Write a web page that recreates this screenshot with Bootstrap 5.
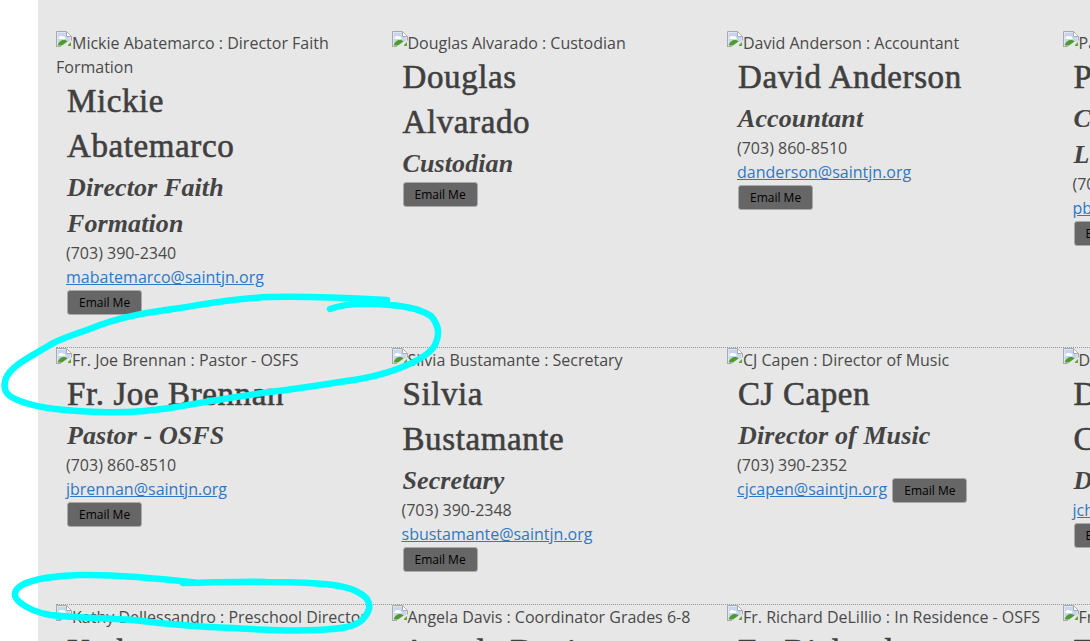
<!DOCTYPE html>
<html lang="en">
<head>
  <meta charset="UTF-8" />
  <meta name="viewport" content="width=device-width, initial-scale=1.0"/>
  <title>Staff Directory</title>
  <link href="https://cdn.jsdelivr.net/npm/bootstrap@5.3.0/dist/css/bootstrap.min.css" rel="stylesheet" />
  <style>
    html, body {
      height: 100%;
      overflow: hidden;
    }

    body {
      position: relative;
      background: #fff;
      font-family: "Open Sans", "Liberation Sans", sans-serif;
      font-size: 16px;
      line-height: 24px;
      color: #4a4a4a;
    }

    .staff-page {
      margin-left: 38px;
      padding: 31px 0 0 18px;
      background: #e7e7e7;
      height: 100%;
      overflow: hidden;
    }

    .staff-row {
      width: 1400px;
      padding-bottom: 32px;
    }

    .staff-row + .staff-row {
      border-top: 1px dotted #999;
    }

    .staff-cell {
      width: 335.5px;
      flex: none;
    }

    .photo-alt {
      padding-right: 10px;
    }

    .photo-alt svg {
      vertical-align: 2px;
    }

    .staff-info {
      padding: 0 10px;
    }

    .staff-name {
      font-family: "Liberation Serif", serif;
      font-size: 33px;
      line-height: 45px;
      font-weight: 400;
      letter-spacing: .6px;
      color: #3f3f3f;
      -webkit-text-stroke: .6px #3f3f3f;
      max-width: 232px;
      margin: 0;
      padding-left: 1px;
    }

    .staff-title {
      font-family: "Liberation Serif", serif;
      font-size: 26px;
      line-height: 36px;
      font-weight: 700;
      font-style: italic;
      letter-spacing: .1px;
      color: #444;
      max-width: 232px;
      margin: 0 0 -1px;
      padding: 1px 0 0 1px;
    }

    .staff-mail {
      color: #2f78c4;
    }

    .mail-btn {
      font-size: 12px;
      line-height: 17px;
      padding: 3px 11px;
      margin-left: 1px;
      margin-top: 1px;
      background: #666;
      border: 1px solid #aaa;
      border-radius: 3px;
      color: #000;
      vertical-align: top;
    }

    .scribble {
      position: absolute;
      left: 0;
      top: 0;
      pointer-events: none;
    }

    .scribble path {
      fill: none;
      stroke: #0ff;
      stroke-width: 6.5;
      stroke-linecap: round;
      stroke-linejoin: round;
    }
  </style>
</head>
<body>

  <svg width="0" height="0" class="d-block" aria-hidden="true">
    <symbol id="brokenImg" viewBox="0 0 16 16">
      <path d="M.5 15.5V.5h10l5 5v4" fill="#f4f4f4" stroke="#a9a9a9"/>
      <path d="M1.5 1.5h8.5v4.500h4.500v4L1.500 14z" fill="#c6d6f0"/>
      <path d="M10.500 1v4.500H15" fill="#fff" stroke="#a9a9a9"/>
      <path d="M2.500 7c.5-2 3-2.500 4-1.500 1.500-.5 3 .5 3 2.500H2.500z" fill="#fff"/>
      <path d="M1.500 14.500c1-3.500 3.500-5.500 6.500-5.500 1.500 0 2.500.5 3.500 1.500L6 14.500z" fill="#4f9a2c"/>
      <path d="M12 14l3-3v4h-3z" fill="#5aa832"/>
      <path d="M0 15.500h5" stroke="#a9a9a9"/>
    </symbol>
  </svg>

  <div class="staff-page">

    <div class="staff-row d-flex">
      <div class="staff-cell">
        <div class="photo-alt"><svg width="16" height="16"><use href="#brokenImg"/></svg>Mickie Abatemarco : Director Faith Formation</div>
        <div class="staff-info">
          <h2 class="staff-name">Mickie Abatemarco</h2>
          <h3 class="staff-title">Director Faith Formation</h3>
          <div>(703) 390-2340</div>
          <a href="#" class="staff-mail d-block">mabatemarco@saintjn.org</a>
          <a href="#" class="btn mail-btn">Email Me</a>
        </div>
      </div>
      <div class="staff-cell">
        <div class="photo-alt"><svg width="16" height="16"><use href="#brokenImg"/></svg>Douglas Alvarado : Custodian</div>
        <div class="staff-info">
          <h2 class="staff-name">Douglas Alvarado</h2>
          <h3 class="staff-title">Custodian</h3>
          <a href="#" class="btn mail-btn">Email Me</a>
        </div>
      </div>
      <div class="staff-cell">
        <div class="photo-alt"><svg width="16" height="16"><use href="#brokenImg"/></svg>David Anderson : Accountant</div>
        <div class="staff-info">
          <h2 class="staff-name">David Anderson</h2>
          <h3 class="staff-title">Accountant</h3>
          <div>(703) 860-8510</div>
          <a href="#" class="staff-mail d-block">danderson@saintjn.org</a>
          <a href="#" class="btn mail-btn">Email Me</a>
        </div>
      </div>
      <div class="staff-cell">
        <div class="photo-alt"><svg width="16" height="16"><use href="#brokenImg"/></svg>Pat Bauer : Coordinator Liturgy</div>
        <div class="staff-info">
          <h2 class="staff-name">Pat Bauer</h2>
          <h3 class="staff-title">Coordinator<br>Liturgy</h3>
          <div>(703) 390-2341</div>
          <a href="#" class="staff-mail d-block">pbauer@saintjn.org</a>
          <a href="#" class="btn mail-btn">Email Me</a>
        </div>
      </div>
    </div>

    <div class="staff-row d-flex">
      <div class="staff-cell">
        <div class="photo-alt"><svg width="16" height="16"><use href="#brokenImg"/></svg>Fr. Joe Brennan : Pastor - OSFS</div>
        <div class="staff-info">
          <h2 class="staff-name">Fr. Joe Brennan</h2>
          <h3 class="staff-title">Pastor - OSFS</h3>
          <div>(703) 860-8510</div>
          <a href="#" class="staff-mail d-block">jbrennan@saintjn.org</a>
          <a href="#" class="btn mail-btn">Email Me</a>
        </div>
      </div>
      <div class="staff-cell">
        <div class="photo-alt"><svg width="16" height="16"><use href="#brokenImg"/></svg>Silvia Bustamante : Secretary</div>
        <div class="staff-info">
          <h2 class="staff-name">Silvia Bustamante</h2>
          <h3 class="staff-title">Secretary</h3>
          <div>(703) 390-2348</div>
          <a href="#" class="staff-mail d-block">sbustamante@saintjn.org</a>
          <a href="#" class="btn mail-btn">Email Me</a>
        </div>
      </div>
      <div class="staff-cell">
        <div class="photo-alt"><svg width="16" height="16"><use href="#brokenImg"/></svg>CJ Capen : Director of Music</div>
        <div class="staff-info">
          <h2 class="staff-name">CJ Capen</h2>
          <h3 class="staff-title">Director of Music</h3>
          <div>(703) 390-2352</div>
          <a href="#" class="staff-mail">cjcapen@saintjn.org</a>
          <a href="#" class="btn mail-btn">Email Me</a>
        </div>
      </div>
      <div class="staff-cell">
        <div class="photo-alt"><svg width="16" height="16"><use href="#brokenImg"/></svg>Deacon John Chase : Deacon</div>
        <div class="staff-info">
          <h2 class="staff-name">Deacon<br>Chase</h2>
          <h3 class="staff-title">Deacon</h3>
          <a href="#" class="staff-mail d-block">jchase@saintjn.org</a>
          <a href="#" class="btn mail-btn">Email Me</a>
        </div>
      </div>
    </div>

    <div class="staff-row d-flex">
      <div class="staff-cell">
        <div class="photo-alt"><svg width="16" height="16"><use href="#brokenImg"/></svg>Kathy Dellessandro : Preschool Director</div>
        <div class="staff-info"><h2 class="staff-name">Kathy Dellessandro</h2></div>
      </div>
      <div class="staff-cell">
        <div class="photo-alt"><svg width="16" height="16"><use href="#brokenImg"/></svg>Angela Davis : Coordinator Grades 6-8</div>
        <div class="staff-info"><h2 class="staff-name">Angela Davis</h2></div>
      </div>
      <div class="staff-cell">
        <div class="photo-alt"><svg width="16" height="16"><use href="#brokenImg"/></svg>Fr. Richard DeLillio : In Residence - OSFS</div>
        <div class="staff-info"><h2 class="staff-name">Fr. Richard DeLillio</h2></div>
      </div>
      <div class="staff-cell">
        <div class="photo-alt"><svg width="16" height="16"><use href="#brokenImg"/></svg>Fr. Michael : In Residence</div>
        <div class="staff-info"><h2 class="staff-name">Fr. Michael</h2></div>
      </div>
    </div>

  </div>

  <!-- hand-drawn highlight marks on top of the page -->
  <svg class="scribble" width="1090" height="641">
    <path d="M387 300C350 298 300 296 270 297C235 298 205 304 180 308C150 312 125 316 100 325C75 335 60 338 50 345C30 357 12 365 6 378C2 390 6 396 20 401C35 407 60 411 100 412C130 413 150 411 170 408C205 402 240 396 270 392C295 389 315 386 340 382C365 379 385 374 400 368C418 361 430 354 435 345C440 335 439 325 431 316C420 309 405 306 390 305C370 303 345 303 330 309"/>
    <path d="M200 583C165 579 120 574 80 575C55 576 35 578 22 585C12 591 13 598 22 604C30 610 40 613 50 615C80 618 105 618 133 620C165 624 200 627 233 628C265 630 295 631 317 630C340 629 355 627 362 620C370 612 371 605 367 599C360 591 348 587 333 585C310 582 290 582 267 582C240 581 210 583 183 583"/>
  </svg>

</body>
</html>
